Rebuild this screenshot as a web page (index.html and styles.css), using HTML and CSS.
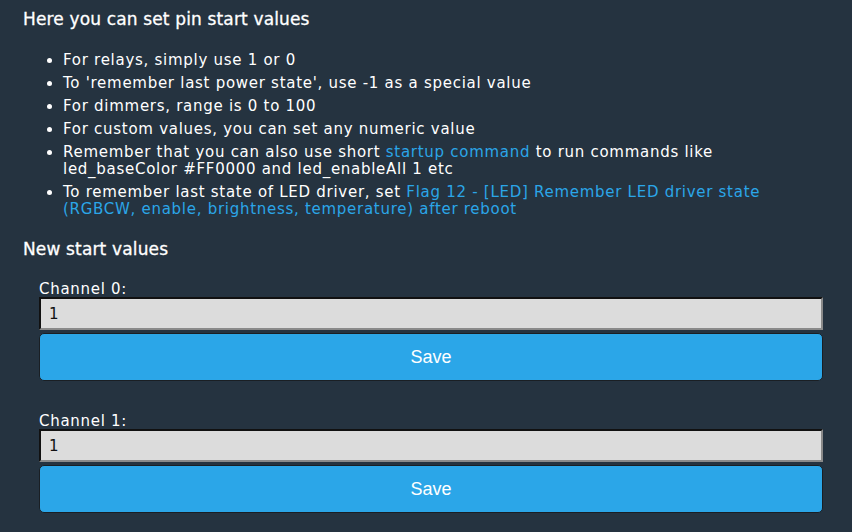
FILE: index.html
```html
<!DOCTYPE html>
<html>
<head>
<meta charset="utf-8">
<link rel="stylesheet" href="styles.css">
</head>
<body>
<div class="page">
  <h3 class="title">Here you can set pin start values</h3>
  <ul class="notes">
    <li>For relays, simply use 1 or 0</li>
    <li>To 'remember last power state', use -1 as a special value</li>
    <li>For dimmers, range is 0 to 100</li>
    <li>For custom values, you can set any numeric value</li>
    <li>Remember that you can also use short <a href="#">startup command</a> to run commands like led_baseColor #FF0000 and led_enableAll 1 etc</li>
    <li>To remember last state of LED driver, set <a href="#">Flag 12 - [LED] Remember LED driver state (RGBCW, enable, brightness, temperature) after reboot</a></li>
  </ul>
  <h3 class="title sub">New start values</h3>
  <form class="channels">
    <div class="channel">
      <label class="label">Channel 0:</label>
      <input class="field" type="text" value="1">
      <button class="save" type="button">Save</button>
    </div>
    <div class="channel">
      <label class="label">Channel 1:</label>
      <input class="field" type="text" value="1">
      <button class="save" type="button">Save</button>
    </div>
  </form>
</div>
</body>
</html>
```
FILE: styles.css
```css
html, body {
  margin: 0;
  padding: 0;
  background: #253340;
}
body {
  color: #ffffff;
  font-family: "DejaVu Sans", Verdana, sans-serif;
  font-size: 15px;
  letter-spacing: 0.72px;
}
.page {
  padding: 9px 23px 0 23px;
}
.title {
  margin: 0;
  font-size: 17px;
  font-weight: normal;
  letter-spacing: 0.15px;
  line-height: 20px;
  -webkit-text-stroke: 0.3px #ffffff;
}
.sub {
  margin-top: 21px;
}
.notes {
  margin: 23px 0 0 0;
  padding-left: 40px;
}
.notes li {
  line-height: 17px;
  margin-bottom: 6px;
}
.notes a {
  color: #2ba6e8;
  text-decoration: none;
}
.channels {
  padding: 22px 6px 0 16px;
}
.channel {
  display: flex;
  flex-direction: column;
  margin-bottom: 32px;
}
.label {
  font-size: 15px;
  line-height: 16px;
}
.field {
  box-sizing: border-box;
  height: 33px;
  margin: 0;
  padding: 0 8px;
  background: #dcdcdc;
  border: 2px solid #111111;
  border-right-color: #8a8a8a;
  border-bottom-color: #8a8a8a;
  font-family: "DejaVu Sans", sans-serif;
  font-size: 15px;
  color: #111;
}
.save {
  box-sizing: border-box;
  height: 48px;
  margin-top: 3px;
  background: #2ba6e8;
  border: 1px solid #1a1f24;
  border-radius: 5px;
  color: #ffffff;
  font-family: "Liberation Sans", Arial, sans-serif;
  font-size: 18px;
  letter-spacing: 0;
}
```
